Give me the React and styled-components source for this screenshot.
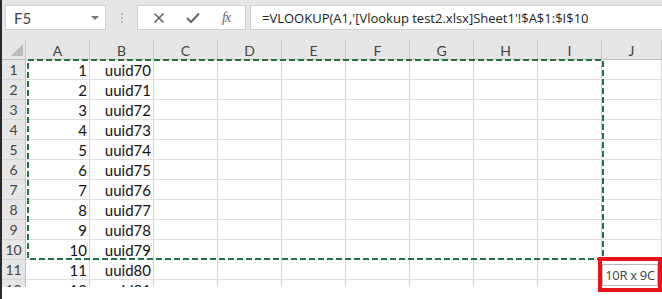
import styled, { createGlobalStyle } from "styled-components";

const GlobalStyle = createGlobalStyle`
  html, body {
    margin: 0;
    padding: 0;
    background: #ffffff;
  }
  body {
    font-family: Lato, "Open Sans", sans-serif;
  }
`;

const Window = styled.div`
  position: relative;
  width: 660px;
  height: 299px;
  border-left: 2px solid #2a2a2a;
  background: #ffffff;
  overflow: hidden;
`;

const Toolbar = styled.div`
  display: flex;
  align-items: center;
  height: 40px;
  padding: 0 0 0 3px;
  background: #e6e6e6;
  box-sizing: border-box;
`;

const NameBox = styled.div`
  display: flex;
  align-items: center;
  justify-content: space-between;
  width: 101px;
  height: 25px;
  margin-top: -5px;
  padding: 0 6px 0 8px;
  box-sizing: border-box;
  background: #fff;
  border: 1px solid #cfcfcf;
  font-size: 15px;
  color: #444;
`;

const Caret = styled.span`
  width: 0;
  height: 0;
  border-left: 4px solid transparent;
  border-right: 4px solid transparent;
  border-top: 4px solid #777;
`;

const Grip = styled.div`
  display: flex;
  flex-direction: column;
  gap: 2px;
  margin: -5px 14px 0 15px;
  span {
    width: 2px;
    height: 2px;
    background: #b5b5b5;
  }
`;

const FuncButtons = styled.div`
  display: flex;
  align-items: center;
  justify-content: space-around;
  width: 109px;
  height: 25px;
  margin-top: -5px;
  padding: 0 4px;
  box-sizing: border-box;
  background: #fff;
  border: 1px solid #cfcfcf;
`;

const FxLabel = styled.span`
  font-family: "Liberation Serif", serif;
  font-style: italic;
  font-size: 14px;
  color: #666;
  letter-spacing: -1px;
`;

const FormulaBox = styled.div`
  flex: 1;
  height: 25px;
  margin: -5px 0 0 4px;
  padding: 0 0 0 11px;
  display: flex;
  align-items: center;
  box-sizing: border-box;
  background: #fff;
  border: 1px solid #cfcfcf;
  border-right: none;
  font-family: "Open Sans", sans-serif;
  font-size: 13px;
  color: #222;
  white-space: nowrap;
`;

const Sheet = styled.div`
  display: grid;
  grid-template-columns: 24px repeat(9, 64px) 1fr;
  grid-auto-rows: 20px;
  height: 247px;
  overflow: hidden;
`;

const ColHead = styled.div`
  display: flex;
  align-items: center;
  justify-content: center;
  background: #e6e6e6;
  border-right: 1px solid #c8c8c8;
  border-bottom: 1px solid #bdbdbd;
  font-size: 14px;
  color: #444;
  padding-top: 1px;
  box-sizing: border-box;
`;

const Corner = styled(ColHead)`
  position: relative;
  &::after {
    content: "";
    position: absolute;
    right: 2px;
    bottom: 3px;
    width: 0;
    height: 0;
    border-left: 12px solid transparent;
    border-bottom: 12px solid #bcbcbc;
  }
`;

const RowHead = styled.div`
  display: flex;
  align-items: center;
  justify-content: center;
  background: #e6e6e6;
  border-right: 1px solid #bdbdbd;
  border-bottom: 1px solid #d4d4d4;
  font-size: 14px;
  color: #444;
  box-sizing: border-box;
`;

const Cell = styled.div`
  display: flex;
  align-items: center;
  justify-content: ${(p) => (p.$right ? "flex-end" : "flex-start")};
  padding: 1px 2px 0 2px;
  border-right: 1px solid #d4d4d4;
  border-bottom: 1px solid #dedede;
  font-size: 15px;
  color: #111;
  box-sizing: border-box;
  white-space: nowrap;
`;

const Marquee = styled.svg`
  position: absolute;
  left: 25px;
  top: 59px;
  pointer-events: none;
`;

const Callout = styled.div`
  position: absolute;
  left: 596px;
  top: 257px;
  width: 64px;
  height: 35px;
  border: 4px solid #e8141c;
  box-sizing: border-box;
  display: flex;
  align-items: center;
  justify-content: center;
`;

const Tip = styled.div`
  padding: 1px 2px;
  background: #fff;
  border: 1px solid #b9b9b9;
  font-family: "Open Sans", sans-serif;
  font-size: 13px;
  letter-spacing: -0.3px;
  color: #444;
  white-space: nowrap;
`;

const columns = ["A", "B", "C", "D", "E", "F", "G", "H", "I", "J"];
const rows = Array.from({ length: 12 }, (_, i) => i + 1);

function Icon({ type }) {
  if (type === "x") {
    return (
      <svg width="12" height="12" viewBox="0 0 12 12">
        <path d="M1.5 1.5 L10.5 10.5 M10.5 1.5 L1.5 10.5" stroke="#666" strokeWidth="1.6" />
      </svg>
    );
  }
  return (
    <svg width="14" height="12" viewBox="0 0 14 12">
      <path d="M1 6 L5 10 L13 1.5" stroke="#666" strokeWidth="2" fill="none" />
    </svg>
  );
}

export default function App() {
  return (
    <>
      <GlobalStyle />
      <Window>
        <Toolbar>
          <NameBox>
            F5
            <Caret />
          </NameBox>
          <Grip>
            <span />
            <span />
            <span />
          </Grip>
          <FuncButtons>
            <Icon type="x" />
            <Icon type="check" />
            <FxLabel>fx</FxLabel>
          </FuncButtons>
          <FormulaBox>=VLOOKUP(A1,'[Vlookup test2.xlsx]Sheet1'!$A$1:$I$10</FormulaBox>
        </Toolbar>
        <Sheet>
          <Corner />
          {columns.map((c) => (
            <ColHead key={c}>{c}</ColHead>
          ))}
          {rows.map((r) => (
            <Row key={r} n={r} />
          ))}
        </Sheet>
        <Marquee width="577" height="201">
          <rect
            x="1"
            y="1"
            width="575"
            height="199"
            fill="none"
            stroke="#217346"
            strokeWidth="2"
            strokeDasharray="6 3"
          />
        </Marquee>
        <Callout>
          <Tip>10R x 9C</Tip>
        </Callout>
      </Window>
    </>
  );
}

function Row({ n }) {
  return (
    <>
      <RowHead>{n}</RowHead>
      <Cell $right>{n}</Cell>
      <Cell $right>uuid{69 + n}</Cell>
      {columns.slice(2).map((c) => (
        <Cell key={c} />
      ))}
    </>
  );
}
